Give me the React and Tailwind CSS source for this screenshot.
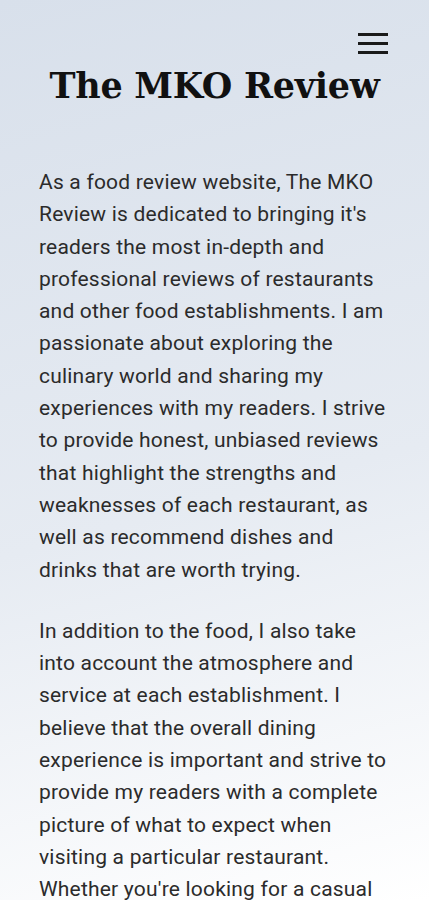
export default function App() {
  return (
    <div className="min-h-[900px] h-[900px] overflow-hidden bg-[linear-gradient(165deg,#d8e0eb_0%,#e6ebf2_55%,#ffffff_100%)] font-['Roboto',sans-serif]">
      <header className="relative pt-[64px]">
        {/* menu button */}
        <button type="button" className="absolute right-[41px] top-[33px] flex flex-col gap-[6px]">
          <span className="block h-[3px] w-[30px] bg-[#1a1a1a]" />
          <span className="block h-[3px] w-[30px] bg-[#1a1a1a]" />
          <span className="block h-[3px] w-[30px] bg-[#1a1a1a]" />
        </button>
        <h1 className="text-center font-['DejaVu_Serif',serif] font-bold text-[35px] leading-[44px] text-[#111] tracking-[-0.3px]">
          The MKO Review
        </h1>
      </header>

      <main className="px-[39px] pt-[58px] text-[21px] leading-[32.3px] text-[#2b2b2b] tracking-[0.2px]">
        <p className="mb-[29px]">
          As a food review website, The MKO Review is dedicated to bringing it's readers the most in-depth and
          professional reviews of restaurants and other food establishments. I am passionate about exploring the
          culinary world and sharing my experiences with my readers. I strive to provide honest, unbiased reviews
          that highlight the strengths and weaknesses of each restaurant, as well as recommend dishes and drinks
          that are worth trying.
        </p>
        <p className="mb-[29px]">
          In addition to the food, I also take into account the atmosphere and service at each establishment. I
          believe that the overall dining experience is important and strive to provide my readers with a complete
          picture of what to expect when visiting a particular restaurant. Whether you're looking for a casual
          lunch spot or a fine dining experience, The MKO Review has you covered.
        </p>
      </main>
    </div>
  );
}
